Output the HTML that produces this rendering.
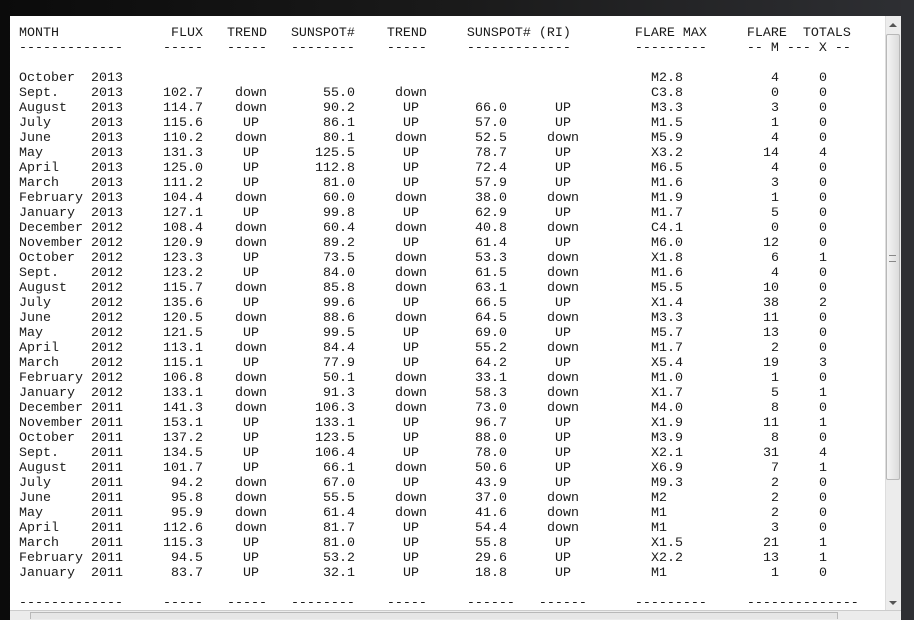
<!DOCTYPE html>
<html><head><meta charset="utf-8"><style>
html,body{margin:0;padding:0;width:914px;height:619px;overflow:hidden;background:linear-gradient(90deg,#0b0b0b 0%,#1a1a1a 50%,#2e2f33 100%);}
#win{position:absolute;left:10px;top:16px;width:875px;height:594px;background:#fff;}
pre{position:absolute;margin:0;font-family:"Liberation Mono","Courier New",monospace;font-size:13.333px;line-height:15px;color:#1a1a1a;}
.r{text-align:right}.c{text-align:center}
#vs{position:absolute;left:885px;top:16px;width:16px;height:594px;background:#ececec;border-left:1px solid #ddd;}
#vt{position:absolute;left:886px;top:34px;width:14px;height:446px;background:linear-gradient(90deg,#f4f4f4,#dcdcdc);border:1px solid #b8b8b8;box-sizing:border-box;border-radius:2px;}
#hs{position:absolute;left:10px;top:610px;width:891px;height:9px;background:#ececec;border-top:1px solid #ccc;}
#ht{position:absolute;left:30px;top:612px;width:808px;height:7px;background:#e6e6e6;border:1px solid #b8b8b8;border-bottom:none;box-sizing:border-box;}
#rd{position:absolute;left:901px;top:0;width:13px;height:619px;background:#2e2f33;}
</style></head><body>
<div id="win"></div>
<pre style="left:19px;top:26px">MONTH              FLUX   TREND   SUNSPOT#    TREND     SUNSPOT# (RI)        FLARE MAX     FLARE  TOTALS
-------------     -----   -----   --------    -----     -------------        ---------     -- M --- X --</pre>
<pre style="left:19px;top:71px">October
Sept.
August
July
June
May
April
March
February
January
December
November
October
Sept.
August
July
June
May
April
March
February
January
December
November
October
Sept.
August
July
June
May
April
March
February
January</pre>
<pre style="left:91px;top:71px">2013
2013
2013
2013
2013
2013
2013
2013
2013
2013
2012
2012
2012
2012
2012
2012
2012
2012
2012
2012
2012
2012
2011
2011
2011
2011
2011
2011
2011
2011
2011
2011
2011
2011</pre>
<pre class="r" style="left:140px;width:63px;top:71px">&nbsp;
102.7
114.7
115.6
110.2
131.3
125.0
111.2
104.4
127.1
108.4
120.9
123.3
123.2
115.7
135.6
120.5
121.5
113.1
115.1
106.8
133.1
141.3
153.1
137.2
134.5
101.7
94.2
95.8
95.9
112.6
115.3
94.5
83.7</pre>
<pre class="c" style="left:235px;width:32px;top:71px">&nbsp;
down
down
UP
down
UP
UP
UP
down
UP
down
down
UP
UP
down
UP
down
UP
down
UP
down
down
down
UP
UP
UP
UP
down
down
down
down
UP
UP
UP</pre>
<pre class="r" style="left:290px;width:65px;top:71px">&nbsp;
55.0
90.2
86.1
80.1
125.5
112.8
81.0
60.0
99.8
60.4
89.2
73.5
84.0
85.8
99.6
88.6
99.5
84.4
77.9
50.1
91.3
106.3
133.1
123.5
106.4
66.1
67.0
55.5
61.4
81.7
81.0
53.2
32.1</pre>
<pre class="c" style="left:395px;width:32px;top:71px">&nbsp;
down
UP
UP
down
UP
UP
UP
down
UP
down
UP
down
down
down
UP
down
UP
UP
UP
down
down
down
UP
UP
UP
down
UP
down
down
UP
UP
UP
UP</pre>
<pre class="r" style="left:440px;width:67px;top:71px">&nbsp;
&nbsp;
66.0
57.0
52.5
78.7
72.4
57.9
38.0
62.9
40.8
61.4
53.3
61.5
63.1
66.5
64.5
69.0
55.2
64.2
33.1
58.3
73.0
96.7
88.0
78.0
50.6
43.9
37.0
41.6
54.4
55.8
29.6
18.8</pre>
<pre class="c" style="left:547px;width:32px;top:71px">&nbsp;
&nbsp;
UP
UP
down
UP
UP
UP
down
UP
down
UP
down
down
down
UP
down
UP
down
UP
down
down
down
UP
UP
UP
UP
UP
down
down
down
UP
UP
UP</pre>
<pre style="left:651px;top:71px">M2.8
C3.8
M3.3
M1.5
M5.9
X3.2
M6.5
M1.6
M1.9
M1.7
C4.1
M6.0
X1.8
M1.6
M5.5
X1.4
M3.3
M5.7
M1.7
X5.4
M1.0
X1.7
M4.0
X1.9
M3.9
X2.1
X6.9
M9.3
M2
M1
M1
X1.5
X2.2
M1</pre>
<pre class="r" style="left:740px;width:39px;top:71px">4
0
3
1
4
14
4
3
1
5
0
12
6
4
10
38
11
13
2
19
1
5
8
11
8
31
7
2
2
2
3
21
13
1</pre>
<pre style="left:819px;top:71px">0
0
0
0
0
4
0
0
0
0
0
0
1
0
0
2
0
0
0
3
0
1
0
1
0
4
1
0
0
0
0
1
1
0</pre>
<pre style="left:19px;top:596px">-------------     -----   -----   --------    -----     ------   ------      ---------     --------------</pre>
<div id="vs"></div><div id="vt"></div>
<div style="position:absolute;left:889px;top:23px;width:0;height:0;border-left:4px solid transparent;border-right:4px solid transparent;border-bottom:4px solid #555"></div>
<div style="position:absolute;left:889px;top:601px;width:0;height:0;border-left:4px solid transparent;border-right:4px solid transparent;border-top:4px solid #555"></div>
<div style="position:absolute;left:889px;top:255px;width:7px;height:5px;border-top:1px solid #888;border-bottom:1px solid #888;"></div>
<div id="hs"></div><div id="ht"></div>
<div id="rd"></div>
</body></html>
